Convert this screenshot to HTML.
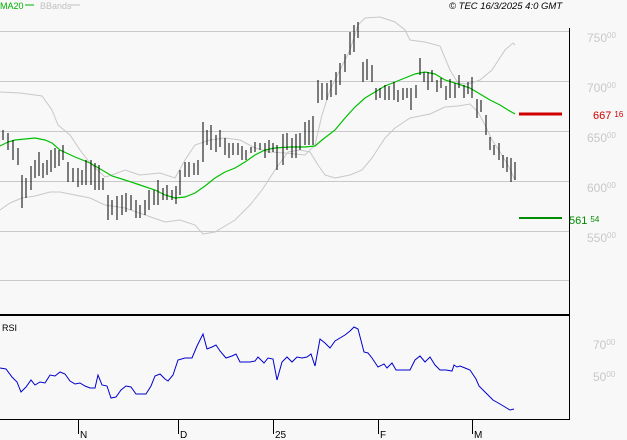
<!DOCTYPE html>
<html><head><meta charset="utf-8"><style>
html,body{margin:0;padding:0;background:#f8f8f8;}
svg{display:block;font-family:"Liberation Sans",sans-serif;}
</style></head><body>
<svg width="627" height="440" viewBox="0 0 627 440" xmlns="http://www.w3.org/2000/svg">
<rect width="627" height="440" fill="#f8f8f8"/>
<g stroke="#c8c8c8" stroke-width="1">
<line x1="0" y1="31.5" x2="569" y2="31.5"/>
<line x1="0" y1="81.5" x2="569" y2="81.5"/>
<line x1="0" y1="131.5" x2="569" y2="131.5"/>
<line x1="0" y1="181.5" x2="569" y2="181.5"/>
<line x1="0" y1="231.5" x2="569" y2="231.5"/>
<line x1="0" y1="280.5" x2="569" y2="280.5"/>
</g>
<g fill="none" stroke="#c8c8c8" stroke-width="1">
<polyline points="0,92 20,93 42,96 52,110 58,125 70,135 80,150 90,163 105,177 112,175 125,170 140,175 160,173 175,178 185,160 195,145 210,140 225,138 240,140 255,148 270,152 285,153 305,155 315,145 322,115 330,90 340,70 350,50 358,25 365,18 380,17 395,22 405,30 410,40 425,42 440,46 450,70 458,83 468,84 480,80 492,70 505,50 513,43 515,45"/>
<polyline points="0,210 10,203 22,198 35,196 50,192 60,192 75,195 90,198 105,205 125,208 145,215 165,222 180,220 195,225 203,234 215,232 225,226 235,220 250,205 262,190 275,170 288,152 300,150 310,152 318,165 325,175 335,178 350,175 362,170 372,158 385,138 395,128 410,118 430,114 445,107 458,106 470,104 478,112 485,125 492,140 500,152 508,165 515,180"/>
</g>
<polyline fill="none" stroke="#00c000" stroke-width="1.2" points="0,146 8,142 15,140 25,139 35,138 45,140 52,143 60,150 75,157 90,163 102,170 112,176 125,180 140,185 155,190 165,195 175,198 185,197 195,193 205,186 215,178 225,172 235,168 245,162 255,155 265,150 275,148 290,147 305,147 315,146 322,140 335,130 345,118 355,107 365,98 375,92 385,86 395,82 405,78 415,74 425,72 435,74 445,80 458,84 470,88 480,94 490,100 500,105 508,110 515,114"/>
<path fill="none" stroke="#000" stroke-width="1" d="M3 130V140M8 133V150M13 140V160M18 148V165M22 175V208M26 178V198M31 166V190M35 160V178M39 152V176M43 163V178M47 160V175M51 150V172M55 148V168M59 150V166M63 145V160M68 162V182M73 168V182M78 168V187M82 170V185M86 160V185M91 160V185M95 163V190M99 165V190M103 178V190M108 195V220M112 200V215M117 196V220M122 195V215M126 193V212M131 195V210M136 200V218M140 205V218M145 200V215M149 190V210M154 190V205M158 180V205M163 188V200M167 185V200M172 190V200M176 186V204M180 170V195M185 162V177M189 162V177M194 163V175M198 160V175M203 122V162M207 130V145M211 125V150M216 135V152M220 130V147M225 138V155M229 143V158M233 143V155M238 143V155M242 146V160M246 150V160M251 147V153M255 142V152M260 143V150M265 143V158M269 140V153M273 143V152M277 145V170M283 134V165M287 133V150M292 138V158M296 134V158M300 133V150M305 122V145M309 120V145M313 116V145M318 80V103M322 83V100M327 83V100M331 80V97M336 72V95M340 63V85M345 54V72M350 32V55M354 25V52M358 22V38M363 62V82M367 59V80M372 65V82M376 88V100M380 88V98M385 85V100M389 86V100M394 82V100M398 90V102M403 88V100M407 88V98M411 88V110M416 85V98M420 58V75M424 72V82M428 72V90M432 70V82M437 80V92M441 78V88M446 86V100M450 79V98M455 83V98M459 75V88M464 85V98M468 82V94M472 77V98M477 99V118M481 100V112M486 115V135M490 137V150M494 145V155M499 143V160M503 155V168M507 157V172M511 158V182M515 162V180"/>
<line x1="519" y1="114" x2="562" y2="114" stroke="#d00000" stroke-width="3"/>
<line x1="519" y1="218" x2="562" y2="218" stroke="#008c00" stroke-width="2"/>
<line x1="569.5" y1="28" x2="569.5" y2="420" stroke="#000" stroke-width="1"/>
<line x1="0" y1="315" x2="570" y2="315" stroke="#000" stroke-width="2"/>
<line x1="0" y1="419.5" x2="570" y2="419.5" stroke="#000" stroke-width="1"/>
<g stroke="#000" stroke-width="1">
<line x1="78.5" y1="419" x2="78.5" y2="434"/>
<line x1="178.5" y1="419" x2="178.5" y2="434"/>
<line x1="273.5" y1="419" x2="273.5" y2="434"/>
<line x1="378.5" y1="419" x2="378.5" y2="434"/>
<line x1="472.5" y1="419" x2="472.5" y2="434"/>
</g>
<g font-size="10" fill="#000">
<text x="80" y="438">N</text><text x="180" y="438">D</text><text x="275" y="438">25</text><text x="380" y="438">F</text><text x="474" y="438">M</text>
<text x="2" y="331" font-size="9">RSI</text>
</g>
<polyline fill="none" stroke="#0000cc" stroke-width="1" points="0,368 6,369 12,377 17,382 21,392 26,387 31,380 35,385 40,382 45,383 50,375 55,376 60,372 65,374 70,381 75,384 80,383 85,386 90,388 95,388 98,375 102,385 107,386 111,398 116,397 121,390 126,386 131,387 136,394 141,394 146,394 151,386 155,376 160,374 165,379 168,381 173,375 178,360 185,358 192,358 197,346 203,334 207,349 212,347 216,345 220,351 226,358 232,356 236,354 240,362 250,362 255,361 258,357 264,363 268,358 273,359 277,380 282,362 287,357 292,362 297,357 302,358 307,357 311,354 315,366 320,339 325,343 330,348 335,341 345,335 350,331 354,327 358,329 364,352 368,353 372,358 378,367 384,364 387,368 392,363 396,370 410,370 415,360 420,356 425,362 430,357 435,365 440,370 446,370 452,371 454,365 457,367 460,366 465,368 470,370 476,379 479,386 485,392 490,397 493,400 500,404 505,407 510,410 514,409"/>
<g fill="#c8c8c8" font-size="12">
<text x="587" y="42">750<tspan font-size="8" dy="-4">00</tspan></text>
<text x="587" y="92">700<tspan font-size="8" dy="-4">00</tspan></text>
<text x="587" y="142">650<tspan font-size="8" dy="-4">00</tspan></text>
<text x="587" y="192">600<tspan font-size="8" dy="-4">00</tspan></text>
<text x="587" y="242">550<tspan font-size="8" dy="-4">00</tspan></text>
<text x="593" y="349">70<tspan font-size="8" dy="-4">00</tspan></text>
<text x="593" y="381">50<tspan font-size="8" dy="-4">00</tspan></text>
</g>
<text x="593" y="119" font-size="11" fill="#d00000">667 <tspan font-size="8" dy="-2">16</tspan></text>
<text x="569" y="224" font-size="11" fill="#008c00">561 <tspan font-size="8" dy="-2">54</tspan></text>
<text x="0" y="9" font-size="9" fill="#00b000">MA20</text>
<line x1="25" y1="5" x2="34" y2="5" stroke="#00b000" stroke-width="1"/>
<text x="40" y="9" font-size="9" fill="#c0c0c0">BBands</text>
<line x1="70" y1="5" x2="80" y2="5" stroke="#c0c0c0" stroke-width="1"/>
<text x="449" y="9" font-size="9.5" font-style="italic" fill="#000">© TEC 16/3/2025 4:0 GMT</text>
</svg>
</body></html>
